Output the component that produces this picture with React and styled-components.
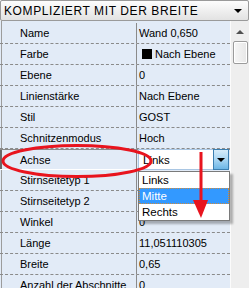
import React from "react";
import styled, { createGlobalStyle } from "styled-components";

const Global = createGlobalStyle`
  html, body { margin: 0; padding: 0; background: #f0f0f0; overflow: hidden; }
  * { box-sizing: border-box; }
`;

const Frame = styled.div`
  position: relative;
  width: 249px;
  height: 288px;
  overflow: hidden;
  background: #f0f0f0;
  font-family: "Liberation Sans", Arial, sans-serif;
  font-size: 11px;
  color: #000;
`;

const Header = styled.div`
  height: 21px;
  display: flex;
  align-items: center;
  justify-content: space-between;
  padding: 0 6px 0 3px;
  background: linear-gradient(#fdfdfd, #f1f1f1 45%, #e2e2e2);
  border: 1px solid #9a9a9a;
  border-radius: 2px;
  font-size: 12px;
  letter-spacing: 0.6px;
  white-space: nowrap;
`;

const HeaderArrow = styled.span`
  width: 0;
  height: 0;
  border-left: 4px solid transparent;
  border-right: 4px solid transparent;
  border-top: 4px solid #000;
`;

const Body = styled.div`
  display: flex;
  height: 267px;
`;

const Grid = styled.div`
  width: 230px;
  padding-top: 2px;
  background: linear-gradient(to right, #e2ebf7 0 1px, #9c9c9c 1px 2px, #e2ebf7 2px);
`;

const Row = styled.div`
  display: grid;
  grid-template-columns: 137px 1fr;
  height: 21px;
  border-bottom: 1px ${(p) => (p.$selected ? "solid #ffffff" : "dashed #8a8a8a")};
  ${(p) => p.$selected && "box-shadow: inset 0 1px 0 #8a8a8a, inset 2px 0 0 #6a6a6a;"}
`;

const Label = styled.div`
  display: flex;
  align-items: center;
  padding-left: 20px;
  border-right: 1px solid #8a8a8a;
  white-space: nowrap;
  overflow: hidden;
`;

const Value = styled.div`
  position: relative;
  display: flex;
  align-items: center;
  gap: 3px;
  padding-left: 2px;
  white-space: nowrap;
`;

const Swatch = styled.span`
  width: 10px;
  height: 10px;
  margin-left: 3px;
  background: #000;
`;

const Combo = styled.div`
  position: relative;
  align-self: flex-start;
  display: flex;
  width: 91px;
  height: 21px;
  margin-left: -1px;
  background: #fff;
  border: 1px solid #a9c6e3;
`;

const ComboText = styled.div`
  flex: 1;
  display: flex;
  align-items: center;
  padding-left: 4px;
  font-size: 11.5px;
`;

const ComboButton = styled.div`
  width: 16px;
  display: flex;
  align-items: center;
  justify-content: center;
  background: linear-gradient(#d6ecfa, #a9d6f3 50%, #6db6e6);
  border: 1px solid #3c7fb1;
  margin: -1px -1px -1px 0;
`;

const SmallArrow = styled.span`
  width: 0;
  height: 0;
  border-left: 4px solid transparent;
  border-right: 4px solid transparent;
  border-top: 4px solid #000;
`;

const List = styled.div`
  position: absolute;
  top: 21px;
  left: -1px;
  width: 92px;
  padding: 0;
  background: #fff;
  border: 1px solid #7a7a7a;
  box-shadow: 3px 3px 2px rgba(0, 0, 0, 0.28);
  z-index: 2;
`;

const Item = styled.div`
  height: 16px;
  display: flex;
  align-items: center;
  padding-left: 2px;
  font-size: 11.5px;
  color: ${(p) => (p.$active ? "#fff" : "#000")};
  background: ${(p) => (p.$active ? "#3399ff" : "transparent")};
  border: 1px ${(p) => (p.$active ? "dotted #d08a3a" : "solid transparent")};
`;

const Scrollbar = styled.div`
  width: 19px;
  border-left: 1px solid #fbfbfb;
  background: #eeeeee;
  display: flex;
  flex-direction: column;
  align-items: center;
  padding-top: 9px;
`;

const UpArrow = styled.span`
  width: 0;
  height: 0;
  border-left: 4px solid transparent;
  border-right: 4px solid transparent;
  border-bottom: 4px solid #505050;
`;

const Thumb = styled.div`
  margin-top: 7px;
  width: 15px;
  height: 23px;
  border: 1px solid #9b9b9b;
  border-radius: 2px;
  background: linear-gradient(to right, #f6f6f6, #e6e6e6);
  box-shadow: inset 0 0 0 1px #fff;
`;

const Annotation = styled.svg`
  position: absolute;
  left: 0;
  top: 0;
  pointer-events: none;
  z-index: 5;
`;

const rows = [
  ["Name", "Wand 0,650"],
  ["Farbe", "color"],
  ["Ebene", "0"],
  ["Linienstärke", "Nach Ebene"],
  ["Stil", "GOST"],
  ["Schnitzenmodus", "Hoch"],
  ["Achse", "combo"],
  ["Stirnseitetyp 1", ""],
  ["Stirnseitetyp 2", ""],
  ["Winkel", "0"],
  ["Länge", "11,051110305"],
  ["Breite", "0,65"],
  ["Anzahl der Abschnitte", "0"],
];

export default function App() {
  return (
    <>
      <Global />
      <Frame>
        <Header>
          <span>KOMPLIZIERT MIT DER BREITE</span>
          <HeaderArrow />
        </Header>
        <Body>
          <Grid>
            {rows.map(([label, value]) => (
              <Row key={label} $selected={value === "combo"}>
                <Label>{label}</Label>
                <Value>
                  {value === "color" ? (
                    <>
                      <Swatch />
                      <span>Nach Ebene</span>
                    </>
                  ) : value === "combo" ? (
                    <Combo>
                      <ComboText>Links</ComboText>
                      <ComboButton>
                        <SmallArrow />
                      </ComboButton>
                      <List>
                        <Item>Links</Item>
                        <Item $active>Mitte</Item>
                        <Item>Rechts</Item>
                      </List>
                    </Combo>
                  ) : (
                    value
                  )}
                </Value>
              </Row>
            ))}
          </Grid>
          <Scrollbar>
            <UpArrow />
            <Thumb />
          </Scrollbar>
        </Body>
        <Annotation width="249" height="288" viewBox="0 0 249 288">
          <ellipse cx="77" cy="161" rx="74" ry="15.5" fill="none" stroke="#e8141e" strokeWidth="3" />
          <rect x="199.5" y="152" width="3" height="50" fill="#e8141e" />
          <polygon points="193,200 208,200 201,218" fill="#e8141e" />
        </Annotation>
      </Frame>
    </>
  );
}
